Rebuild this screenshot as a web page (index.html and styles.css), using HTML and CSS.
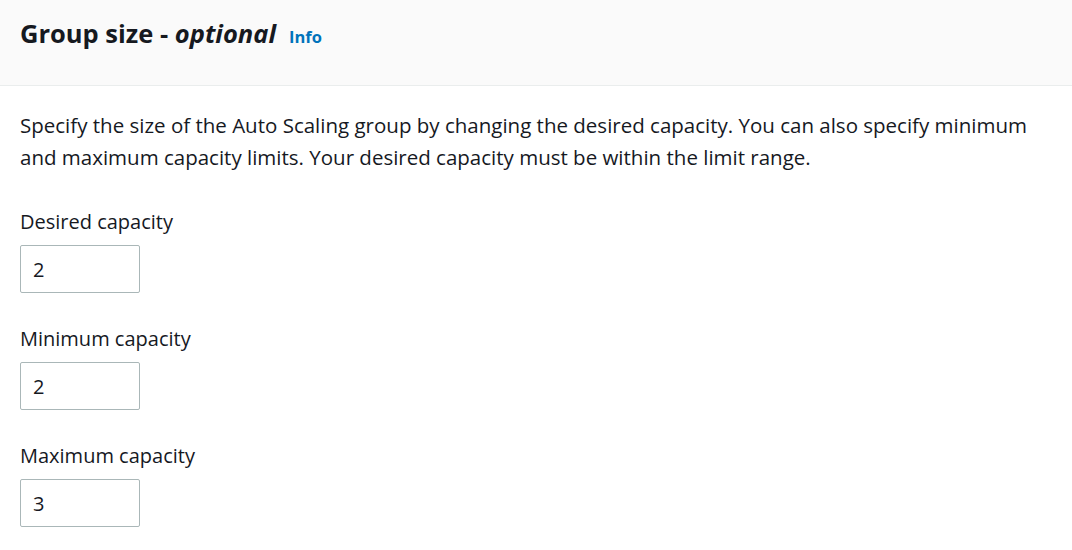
FILE: index.html
```html
<!DOCTYPE html>
<html lang="en">
<head>
<meta charset="utf-8">
<title>Group size</title>
<link rel="stylesheet" href="styles.css">
</head>
<body>
<section class="panel">
  <header class="panel-header">
    <h2 class="panel-title">Group size - <em>optional</em><a class="info-link" href="#">Info</a></h2>
  </header>
  <div class="panel-body">
    <p class="description">Specify the size of the Auto Scaling group by changing the desired capacity. You can also specify minimum and maximum capacity limits. Your desired capacity must be within the limit range.</p>
    <div class="fields">
      <div class="field">
        <label class="field-label" for="desired">Desired capacity</label>
        <input class="field-input" id="desired" type="text" value="2">
      </div>
      <div class="field">
        <label class="field-label" for="minimum">Minimum capacity</label>
        <input class="field-input" id="minimum" type="text" value="2">
      </div>
      <div class="field">
        <label class="field-label" for="maximum">Maximum capacity</label>
        <input class="field-input" id="maximum" type="text" value="3">
      </div>
    </div>
  </div>
</section>
</body>
</html>
```

FILE: styles.css
```css
html, body {
  margin: 0;
  padding: 0;
  background: #ffffff;
}

body {
  font-family: "Open Sans", "Noto Sans", Arial, sans-serif;
  color: #16191f;
  width: 1072px;
  height: 550px;
  overflow: hidden;
}

.panel-header {
  box-sizing: border-box;
  height: 86px;
  background: #fafafa;
  border-bottom: 1px solid #eaeded;
  padding: 18px 20px 0;
}

.panel-title {
  margin: 0;
  font-size: 25.5px;
  line-height: 31px;
  font-weight: 700;
  color: #16191f;
}

.panel-title em {
  font-style: italic;
}

.info-link {
  margin-left: 13px;
  font-size: 16.5px;
  line-height: 1;
  font-weight: 700;
  color: #0073bb;
  text-decoration: none;
}

.panel-body {
  padding: 23px 20px 0;
}

.description {
  margin: 0 0 33px;
  font-size: 20.5px;
  line-height: 32px;
}

.fields {
  display: flex;
  flex-direction: column;
  gap: 30px;
}

.field {
  display: flex;
  flex-direction: column;
  align-items: flex-start;
}

.field-label {
  font-size: 20px;
  line-height: 32px;
  margin-bottom: 7px;
}

.field-input {
  box-sizing: border-box;
  width: 120px;
  height: 48px;
  border: 1px solid #aab7b8;
  border-radius: 2px;
  padding: 0 12px;
  font-family: "Open Sans", "Noto Sans", Arial, sans-serif;
  font-size: 20px;
  color: #16191f;
  background: #ffffff;
  outline: none;
}
```
